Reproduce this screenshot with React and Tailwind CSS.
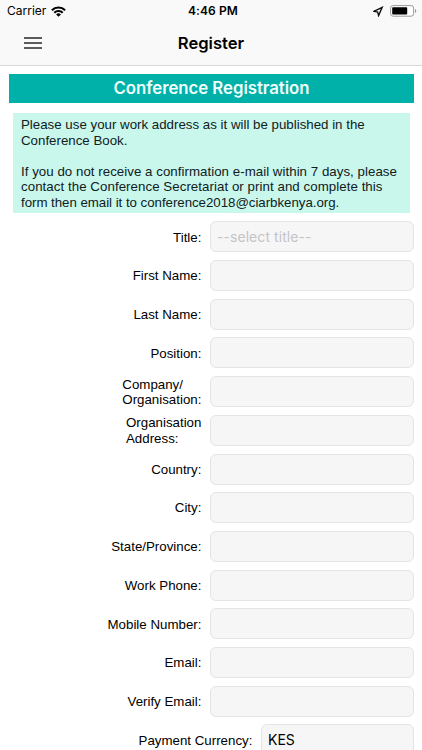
const fields = [
  { label: ['Title:'], placeholder: '--select title--' },
  { label: ['First Name:'] },
  { label: ['Last Name:'] },
  { label: ['Position:'] },
  { label: ['Company/', 'Organisation:'] },
  { label: ['Organisation', 'Address:'] },
  { label: ['Country:'] },
  { label: ['City:'] },
  { label: ['State/Province:'] },
  { label: ['Work Phone:'] },
  { label: ['Mobile Number:'] },
  { label: ['Email:'] },
  { label: ['Verify Email:'] },
  { label: ['Payment Currency:'], value: 'KES', narrow: true },
];

function Wifi() {
  return (
    <svg className="ml-[5px] h-[11px] w-[15px]" viewBox="0 0 15 11">
      <g fill="none" stroke="#000" strokeWidth="2.1">
        <path d="M0.9 4.2A9.3 9.3 0 0 1 14.1 4.2" />
        <path d="M3.3 6.8A5.9 5.9 0 0 1 11.7 6.8" />
      </g>
      <path d="M7.5 10.8L5.1 8.4A3.4 3.4 0 0 1 9.9 8.4Z" />
    </svg>
  );
}

function StatusBar() {
  return (
    <div className="grid h-[22px] grid-cols-3 items-center px-[7px] font-['Inter','Liberation_Sans',sans-serif] text-[12px] text-black">
      <div className="flex items-center">
        <span className="text-[12px]">Carrier</span>
        <Wifi />
      </div>
      <div className="pl-[4px] text-center text-[12px] font-semibold tracking-[0.1px] whitespace-nowrap">4:46 PM</div>
      <div className="flex items-center justify-end gap-[6px] -mr-[3px]">
        <svg className="h-[11px] w-[11px]" viewBox="0 0 11 11">
          <path d="M9.2 1.3L0.9 5.3L4.7 6L5.6 9.6Z" fill="none" stroke="#111" strokeWidth="1.4" strokeLinejoin="miter" />
        </svg>
        <svg className="h-[12px] w-[28px]" viewBox="0 0 28 12">
          <rect x="0.6" y="0.6" width="23" height="10.6" rx="2.5" fill="#fff" stroke="#999" strokeWidth="1" />
          <rect x="2.2" y="2.2" width="15" height="7.4" rx="0.8" />
          <path d="M25 4v4a2.2 2.2 0 0 0 0-4z" fill="#999" />
        </svg>
      </div>
    </div>
  );
}

function Header() {
  return (
    <header className="h-[66px] border-b border-[#d9d9d9] bg-[#f9f9f9]">
      <StatusBar />
      <div className="grid h-[43px] grid-cols-[1fr_auto_1fr] items-center">
        <button className="-mt-px ml-6 flex w-[18px] flex-col gap-[3px]" aria-label="Menu">
          <span className="h-[2px] w-full bg-[#5c5a5c]" />
          <span className="h-[2px] w-full bg-[#5c5a5c]" />
          <span className="h-[2px] w-full bg-[#5c5a5c]" />
        </button>
        <h1 className="font-['Inter','Liberation_Sans',sans-serif] text-[16.6px] font-semibold text-black">Register</h1>
      </div>
    </header>
  );
}

function Field({ label, placeholder, value, narrow }) {
  return (
    <div className="flex h-[31px] shrink-0 items-center justify-end">
      <label className="pt-px text-[13.3px] leading-[15.4px] whitespace-nowrap text-black">
        {label.map((line) => (
          <span className="block" key={line}>{line}</span>
        ))}
      </label>
      <div
        className={`ml-[8.6px] flex h-[31px] items-center rounded-[6px] border border-[#e4e4e4] bg-[#f6f6f6] px-1.5 pb-px font-['Inter','Liberation_Sans',sans-serif] text-[14px] ${narrow ? 'w-[153px]' : 'w-[204px]'}`}
      >
        {placeholder && <span className="tracking-[0.06px] text-[#c4c4c7]">{placeholder}</span>}
        {value && <span className="text-black">{value}</span>}
      </div>
    </div>
  );
}

export default function App() {
  return (
    <div className="h-[750px] w-[422px] overflow-hidden bg-white font-['Liberation_Sans',Arial,sans-serif]">
      <Header />
      <main className="px-2 pt-[7.6px]">
        <h2 className="ml-px flex h-[29px] items-center justify-center bg-[#00b1a9] pt-[1.5px] font-['Inter','Liberation_Sans',sans-serif] text-[16.8px] font-semibold text-[#f0fffc] tracking-[-0.04px]">
          Conference Registration
        </h2>
        <div className="mt-[10.4px] mr-1 ml-[5px] h-[100px] bg-[#c9f7ec] pt-[4.5px] pl-2 text-[13.3px] leading-[15.4px] whitespace-nowrap text-[#10201d]">
          <p>Please use your work address as it will be published in the</p>
          <p>Conference Book.</p>
          <p className="mt-[15.4px] tracking-[0.03px]">If you do not receive a confirmation e-mail within 7 days, please</p>
          <p className="tracking-[0.05px]">contact the Conference Secretariat or print and complete this</p>
          <p className="tracking-[-0.04px]">form then email it to conference2018@ciarbkenya.org.</p>
        </div>
        <form className="mt-[8.4px] flex flex-col gap-[7.7px]">
          {fields.map((field) => (
            <Field key={field.label[0]} {...field} />
          ))}
        </form>
      </main>
    </div>
  );
}
